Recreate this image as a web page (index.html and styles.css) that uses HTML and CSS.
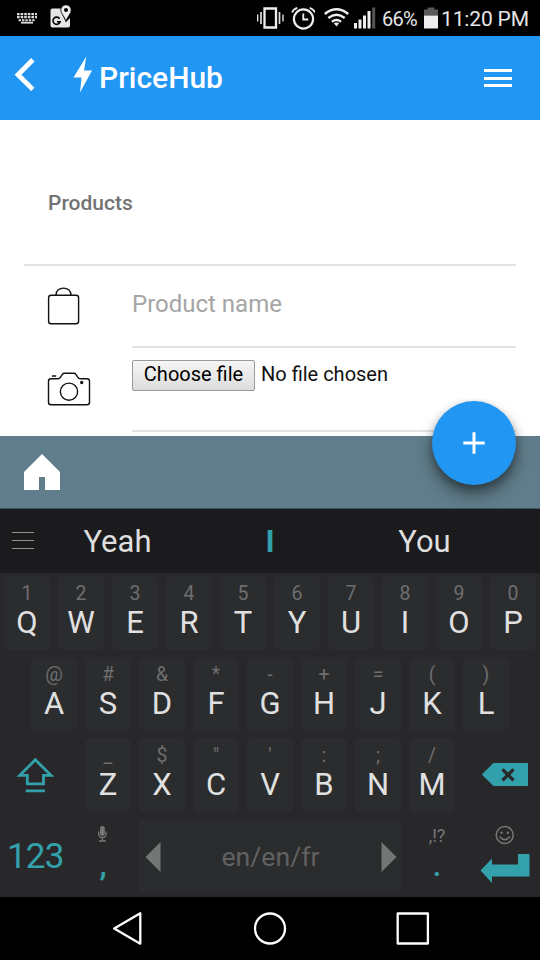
FILE: index.html
```html
<!DOCTYPE html>
<html lang="en">
<head>
<meta charset="utf-8">
<title>PriceHub</title>
<link rel="stylesheet" href="styles.css">
</head>
<body>
<div class="phone">
  <div class="status">
    <svg class="st-keyboard" width="22" height="14" viewBox="16 11 22 14"><path d="M17 14.2h20M17 17.2h20" stroke="#ddd" stroke-width="2.2" stroke-dasharray="2.6 1"/><path d="M18.6 20.2h17" stroke="#ddd" stroke-width="2" stroke-dasharray="2.4 1"/><path d="M21 22.7h12" stroke="#ddd" stroke-width="1.8"/></svg>
    <svg class="st-maps" width="22" height="24" viewBox="50 5 22 24"><path d="M52.500 8.500H62V14l4 8 4-4v7.500q0 2-2 2H52.500q-2 0-2-2v-15q0-2 2-2z" fill="#e6e6e6"/><path d="M59.600 18.700a3.600 3.600 0 1 0 .5 3H57" fill="none" stroke="#000" stroke-width="1.600"/><path d="M66 4.800a5.200 5.200 0 0 0-5.200 5.200c0 4 3.700 6 5.200 11.500C67.500 16 71.200 14 71.200 10A5.200 5.200 0 0 0 66 4.800z" fill="#eee" stroke="#000" stroke-width=".8"/><circle cx="66" cy="10" r="2" fill="#000"/></svg>
    <svg class="st-vibrate" width="28" height="24" viewBox="256 6 28 24"><path d="M264.500 8.500h11.500v19h-11.500z" fill="none" stroke="#eee" stroke-width="2.300"/><path d="M261 12v12M279.500 12v12" stroke="#ddd" stroke-width="1.700"/><path d="M257.700 14.500v7M283 14.500v7" stroke="#ddd" stroke-width="1.400"/></svg>
    <svg class="st-alarm" width="24" height="24" viewBox="291 6 24 24"><circle cx="303.500" cy="19" r="9.600" fill="none" stroke="#eee" stroke-width="2.200"/><path d="M303.300 13.500v6h5" fill="none" stroke="#eee" stroke-width="1.800"/><path d="M292 12.500q1.500-3.500 5.300-4.700M315 12.500q-1.500-3.500-5.300-4.700" fill="none" stroke="#eee" stroke-width="1.800"/></svg>
    <svg class="st-wifi" width="26" height="20" viewBox="324 7 26 20"><path d="M324.800 14q11.700-9.500 23.400 0M328.300 18q8.200-6.500 16.400 0M332 21.700q4.500-3.500 9 0" fill="none" stroke="#eee" stroke-width="2.500"/><path d="M333.800 23.300q2.700-1.600 5.400 0l-2.700 3.200z" fill="#eee"/></svg>
    <svg class="st-signal" width="22" height="22" viewBox="354 7 22 22"><path d="M355.500 28.500V23M360 28.500v-9M364.500 28.500V15.500M369 28.500V11" stroke="#eee" stroke-width="3"/><path d="M373.700 28.500V7.500" stroke="#555" stroke-width="3"/></svg>
    <span class="st-percent">66%</span>
    <svg class="st-battery" width="14" height="22" viewBox="424 7 14 22"><path d="M427.500 7.500h7v2h3.500v6h-14v-6h3.500z" fill="#5a5a5a"/><path d="M424 15.500h14v13h-14z" fill="#eee"/></svg>
    <span class="st-time">11:20 PM</span>
  </div>

  <header class="header">
    <svg class="back" width="22" height="36" viewBox="14 57 22 36"><path d="M32.800 59.700 18 74.700l14.800 14.700" fill="none" stroke="#fff" stroke-width="4.800"/></svg>
    <svg class="bolt" width="20" height="38" viewBox="73 56 20 38"><path d="M86.300 56.500 73.500 77.500h8L80 92.500l12-22h-8z" fill="#fff"/></svg>
    <h1 class="brand">PriceHub</h1>
    <div class="menu"><i></i><i></i><i></i></div>
  </header>

  <main class="content">
    <h2 class="section-title">Products</h2>
    <div class="list">
      <div class="item">
        <svg class="item-icon" width="48" height="44" viewBox="44 284 48 44"><rect x="48.600" y="295.200" width="30" height="28.600" rx="2.500"/><path d="M56 295c0-9.200 15-9.200 15 0"/></svg>
        <div class="field name-field">Product name</div>
      </div>
      <div class="item">
        <svg class="item-icon camera" width="48" height="44" viewBox="44 368 48 44"><path d="M51 378.700h7q1.500 0 2.500-1.600l2-3q.6-.8 1.800-.8h9.600q1.200 0 1.800.8l2 3q1 1.600 2.500 1.600H87q2.500 0 2.500 2.500v21q0 2.500-2.500 2.500H51q-2.500 0-2.500-2.500v-21q0-2.500 2.500-2.500zM52 376h4.200"/><circle cx="69" cy="391.700" r="8.600"/><circle cx="81.700" cy="382.500" r="1" fill="#111"/></svg>
        <div class="field file-field"><span class="file-button">Choose file</span><span class="file-name">No file chosen</span></div>
      </div>
    </div>
  </main>

  <footer class="toolbar">
    <svg width="36" height="36" viewBox="24 454 36 36"><path d="M42 454 60 472v18H45v-13h-6v13H24v-18z" fill="#fff"/></svg>
    <div class="fab"><svg width="24" height="24" viewBox="0 0 24 24"><path d="M12 1.300v21.400M1.300 12h21.400" stroke="#fff" stroke-width="3"/></svg></div>
  </footer>

  <div class="suggestions">
    <div class="sug-menu"><i></i><i></i><i></i></div>
    <span class="sug">Yeah</span><span class="sug current">I</span><span class="sug last">You</span>
  </div>

  <div class="keyboard">
    <div class="row">
      <div class="key"><small>1</small><b>Q</b></div><div class="key"><small>2</small><b>W</b></div><div class="key"><small>3</small><b>E</b></div><div class="key"><small>4</small><b>R</b></div><div class="key"><small>5</small><b>T</b></div><div class="key"><small>6</small><b>Y</b></div><div class="key"><small>7</small><b>U</b></div><div class="key"><small>8</small><b>I</b></div><div class="key"><small>9</small><b>O</b></div><div class="key"><small>0</small><b>P</b></div>
    </div>
    <div class="row">
      <div class="key"><small>@</small><b>A</b></div><div class="key"><small>#</small><b>S</b></div><div class="key"><small>&amp;</small><b>D</b></div><div class="key"><small>*</small><b>F</b></div><div class="key"><small>-</small><b>G</b></div><div class="key"><small>+</small><b>H</b></div><div class="key"><small>=</small><b>J</b></div><div class="key"><small>(</small><b>K</b></div><div class="key"><small>)</small><b>L</b></div>
    </div>
    <div class="row">
      <div class="side"><svg width="81" height="81" viewBox="0 735 81 81"><path d="M35.300 759.800 19.800 775.300H27.300v8.500h16.200v-8.500h7.500zM25.700 790.800h19.200" fill="none" stroke="#33a1ab" stroke-width="2.800"/></svg></div>
      <div class="key"><small>_</small><b>Z</b></div><div class="key"><small>$</small><b>X</b></div><div class="key"><small>"</small><b>C</b></div><div class="key"><small>'</small><b>V</b></div><div class="key"><small>:</small><b>B</b></div><div class="key"><small>;</small><b>N</b></div><div class="key"><small>/</small><b>M</b></div>
      <div class="side"><svg width="81" height="81" viewBox="459 735 81 81"><path d="M481.800 774.500 493.500 763H528v23h-34.500z" fill="#33a1ab"/><path d="m502.500 769.300 11 11m0-11-11 11" stroke="#28282a" stroke-width="3.300"/></svg></div>
    </div>
    <div class="row">
      <div class="side numbers">123</div>
      <div class="punct comma"><svg width="10" height="18" viewBox="97 825 10 18"><rect x="100" y="826" width="4.800" height="10" rx="2.400" fill="#777"/><path d="M98.700 831.500v2.500q0 3.500 3.700 3.500t3.700-3.500v-2.500M102.400 837.500v3.500M99 841h7" fill="none" stroke="#777" stroke-width="1.300"/></svg><b>,</b></div>
      <div class="space"><svg width="16" height="30" viewBox="0 0 16 30"><path d="M.5 15 15.500 0v30z" fill="#747676"/></svg><span>en/en/fr</span><svg width="16" height="30" viewBox="0 0 16 30"><path d="M15.500 15 .5 0v30z" fill="#747676"/></svg></div>
      <div class="punct period"><small>,!?</small><b>.</b></div>
      <div class="side"><svg width="81" height="81" viewBox="459 816 81 81"><circle cx="504.700" cy="835" r="8.500" fill="none" stroke="#777" stroke-width="1.500"/><path d="M499.500 836.500q5.200 6.500 10.400 0" fill="none" stroke="#777" stroke-width="1.400"/><circle cx="501.500" cy="832.700" r="1.200" fill="#777"/><circle cx="507.900" cy="832.700" r="1.200" fill="#777"/><path d="M480.500 870.500 492 858.500v6h26V854h11.500v22.500H492v6.500z" fill="#33a1ab"/></svg></div>
    </div>
  </div>

  <nav class="nav">
    <svg width="540" height="63" viewBox="0 897 540 63"><g fill="none" stroke="#fff" stroke-width="2.300" stroke-linejoin="round"><path d="M114.200 928.500 140.300 913.300v30.400z"/><circle cx="270" cy="928.500" r="15"/><path d="M397.700 913.500h30.200v30h-30.200z"/></g></svg>
  </nav>
</div>
</body>
</html>
```

FILE: styles.css
```css
* { box-sizing: border-box; }
body { margin: 0; font-family: Roboto, "Liberation Sans", sans-serif; background: #fff; }
svg { display: block; flex: none; }
h1, h2 { margin: 0; }
b, small { font-weight: 400; }
.phone { width: 540px; height: 960px; overflow: hidden; display: flex; flex-direction: column; }
.phone > * { flex: none; }

.status { height: 36px; background: #000; color: #e6e6e6; display: flex; align-items: flex-start; white-space: nowrap; }
.st-keyboard { margin: 11px 12px 0 16px; }
.st-maps { margin-top: 5px; }
.st-vibrate { margin: 6px 7px 0 184px; }
.st-alarm { margin-top: 6px; }
.st-wifi { margin: 7px 4px 0 9px; }
.st-signal { margin-top: 7px; }
.st-percent { width: 43px; margin-left: 6px; margin-right: -1px; font-size: 20px; line-height: 24px; padding-top: 7px; letter-spacing: -.8px; }
.st-battery { margin-top: 7px; }
.st-time { margin-left: 3px; font-size: 21px; line-height: 24px; padding-top: 7px; letter-spacing: -.15px; }

.header { height: 84px; background: #2196f3; color: #fff; display: flex; align-items: flex-start; }
.back { margin: 21px 0 0 14px; }
.bolt { margin: 20px 0 0 37px; }
.brand { margin: 24px 0 0 6px; font-size: 30px; line-height: 36px; font-weight: 500; }
.menu { width: 28px; margin: 33px 28px 0 auto; display: flex; flex-direction: column; gap: 4.500px; }
.menu i { height: 3px; background: #fff; }

.content { height: 316px; padding: 0 24px; background: #fff; }
.section-title { height: 144px; padding: 70px 0 0 24px; font-size: 21px; line-height: 26px; font-weight: 500; color: #737373; }
.list { border-top: 2px solid #e2e2e2; }
.item { display: flex; height: 84px; }
.item:first-child { height: 82px; }
.item-icon { margin: 18px 40px 0 20px; fill: none; stroke: #111; stroke-width: 1.400; }
.camera { margin-top: 20px; }
.field { flex: 1; border-bottom: 2px solid #e2e2e2; }
.name-field { padding-top: 24px; font-size: 24px; line-height: 28px; color: #a5a5a5; }
.file-field { display: flex; align-items: flex-start; padding-top: 12px; font-size: 20px; line-height: 28px; color: #111; }
.file-button { width: 123px; height: 31px; border: 1px solid #999; border-radius: 2px; text-align: center; line-height: 27px; background: linear-gradient(#f6f6f6, #dcdcdc); color: #000; }
.file-name { margin-left: 6px; }

.toolbar { position: relative; height: 73px; padding: 18px 24px; background: #607d8b; border-bottom: 1px solid #3f535c; }
.fab { position: absolute; right: 24px; top: -35.500px; width: 84px; height: 84px; border-radius: 50%; background: #2196f3; display: flex; align-items: center; justify-content: center; box-shadow: 0 10px 16px rgba(0,0,0,.36), 0 4px 8px rgba(0,0,0,.28); clip-path: inset(-2px -30px -24px -30px); }

.suggestions { height: 64px; background: #1b1b1d; display: flex; align-items: flex-start; color: #dedede; font-size: 31px; line-height: 36px; padding: 15px 0 0 12px; }
.sug-menu { width: 22px; margin: 8px 28px 0 0; display: flex; flex-direction: column; gap: 7px; }
.sug-menu i { height: 1px; background: #929292; }
.sug { width: 111px; text-align: center; }
.sug.current { width: 194px; font-weight: 700; color: #33a1ab; }
.sug.last { width: 115px; }

.keyboard { height: 324px; background: #28282a; }
.row { height: 81px; display: flex; justify-content: center; }
.key { width: 46px; height: 74px; margin: 3px 4px 0; border-radius: 5px; background: #2b2c2e; padding-top: 8px; display: flex; flex-direction: column; align-items: center; }
.key small { font-size: 19.500px; line-height: 20px; color: #6e6e6e; }
.key b { margin-top: 2.500px; font-size: 31px; line-height: 32px; color: #e0e0e0; }
.side { width: 81px; height: 81px; }
.numbers { padding: 18px 0 0 7px; font-size: 35px; line-height: 45px; letter-spacing: -.8px; color: #33a1ab; }
.punct { width: 54px; display: flex; flex-direction: column; align-items: center; }
.punct b { color: #33a1ab; font-size: 32px; line-height: 32px; }
.comma { padding: 9px 12px 0 0; }
.comma b { margin: 6px 0 0 2px; font-weight: 500; }
.period { padding: 10px 0 0 10px; }
.period small { color: #777; font-size: 18px; line-height: 20px; }
.period b { margin-top: 3px; font-weight: 500; }
.space { width: 262px; height: 74px; margin: 3px 4px 0; border-radius: 5px; background: #2b2c2e; padding: 2px 4.500px 0 5.500px; display: flex; align-items: center; justify-content: space-between; color: #606161; font-size: 26.700px; }
.nav { height: 63px; background: #000; }
```
